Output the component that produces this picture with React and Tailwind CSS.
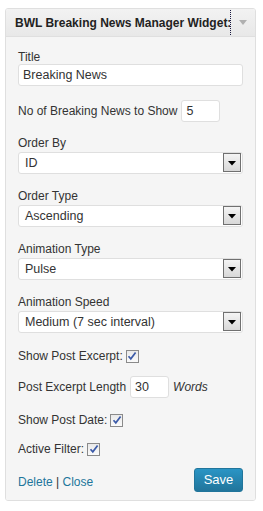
import React from "react";

const font = { fontFamily: '"Liberation Sans", Arial, sans-serif' };

const SelectBox = ({ value }) => (
  <div className="relative h-[22px] w-full bg-white border border-[#dfdfdf] rounded-[3px] flex items-center pl-[6px] text-[12.5px] text-[#333]">
    <span>{value}</span>
    <div className="absolute right-[1px] top-[0px] w-[18px] h-[19px] border border-[#707070] bg-gradient-to-b from-[#f4f4f4] to-[#d8d8d8] flex items-center justify-center">
      <svg width="8" height="5" viewBox="0 0 8 5" className="mt-[2px]">
        <path d="M0 0 H8 L4 4.5 Z" fill="#000" />
      </svg>
    </div>
  </div>
);

const Check = () => (
  <span className="inline-flex w-[13px] h-[13px] border border-[#8a8a8a] bg-gradient-to-b from-[#e9e9e9] to-[#fafafa] items-center justify-center ml-[3px]">
    <svg width="10" height="10" viewBox="0 0 10 10">
      <path d="M1.5 5.2 L3.8 7.8 L8.6 1.5" fill="none" stroke="#3b5aa8" strokeWidth="1.7" />
    </svg>
  </span>
);

const Label = ({ children }) => (
  <div className="h-[17px] leading-[16px] text-[#333]">{children}</div>
);

const App = () => {
  return (
    <div className="w-[263px] h-[511px] bg-white pt-[8px] px-[5px]" style={font}>
      <div className="w-[251px] border border-[#dfdfdf] rounded-[3px] overflow-hidden">
        {/* Header */}
        <div className="h-[28px] flex border-b border-[#dfdfdf] bg-gradient-to-b from-[#f2f2f2] to-[#e8e8e8]">
          <div className="w-[225px] my-[1px] border-r border-dotted border-[#1a1a40] overflow-hidden whitespace-nowrap pl-[9px] leading-[26px] text-[12px] font-bold text-[#222]">
            BWL Breaking News Manager Widget:
          </div>
          <div className="flex-1 flex items-center justify-center">
            <svg width="8" height="5" viewBox="0 0 8 5">
              <path d="M0 0 H8 L4 5 Z" fill="#b0b0b0" />
            </svg>
          </div>
        </div>

        {/* Body */}
        <div className="bg-[#f5f5f5] px-[12px] pt-[13px] pb-[8px] text-[12px] text-[#333]">
          <div className="h-[14px] leading-[14px]">Title</div>
          <div className="h-[22px] w-full bg-white border border-[#dfdfdf] rounded-[3px] flex items-center pl-[4px] text-[12.5px]">
            Breaking News
          </div>

          <div className="mt-[14px] flex items-center h-[22px]">
            <span>No of Breaking News to Show</span>
            <div className="ml-[4px] w-[39px] h-[22px] bg-white border border-[#dfdfdf] rounded-[3px] flex items-center pl-[4px] text-[12.5px]">
              5
            </div>
          </div>

          <div className="mt-[13px]">
            <Label>Order By</Label>
            <SelectBox value="ID" />
          </div>
          <div className="mt-[14px]">
            <Label>Order Type</Label>
            <SelectBox value="Ascending" />
          </div>
          <div className="mt-[14px]">
            <Label>Animation Type</Label>
            <SelectBox value="Pulse" />
          </div>
          <div className="mt-[14px]">
            <Label>Animation Speed</Label>
            <SelectBox value="Medium (7 sec interval)" />
          </div>

          <div className="mt-[15px] h-[16px] flex items-center">
            <span>Show Post Excerpt:</span>
            <Check />
          </div>

          <div className="mt-[12px] h-[22px] flex items-center">
            <span>Post Excerpt Length</span>
            <div className="ml-[4px] w-[39px] h-[22px] bg-white border border-[#dfdfdf] rounded-[3px] flex items-center pl-[4px] text-[12.5px]">
              30
            </div>
            <span className="ml-[4px] italic">Words</span>
          </div>

          <div className="mt-[14px] h-[16px] flex items-center">
            <span>Show Post Date:</span>
            <Check />
          </div>

          <div className="mt-[13px] h-[16px] flex items-center">
            <span>Active Filter:</span>
            <Check />
          </div>

          <div className="mt-[11px] flex items-center justify-between">
            <div className="mt-[4px]">
              <a className="text-[#21759b]">Delete</a>
              <span className="text-[#333]"> | </span>
              <a className="text-[#21759b]">Close</a>
            </div>
            <button className="w-[49px] h-[24px] rounded-[3px] border border-[#21759b] bg-gradient-to-b from-[#2a95c5] to-[#21759b] text-white text-[13px] leading-[22px]">
              Save
            </button>
          </div>
        </div>
      </div>
    </div>
  );
};

export default App;
